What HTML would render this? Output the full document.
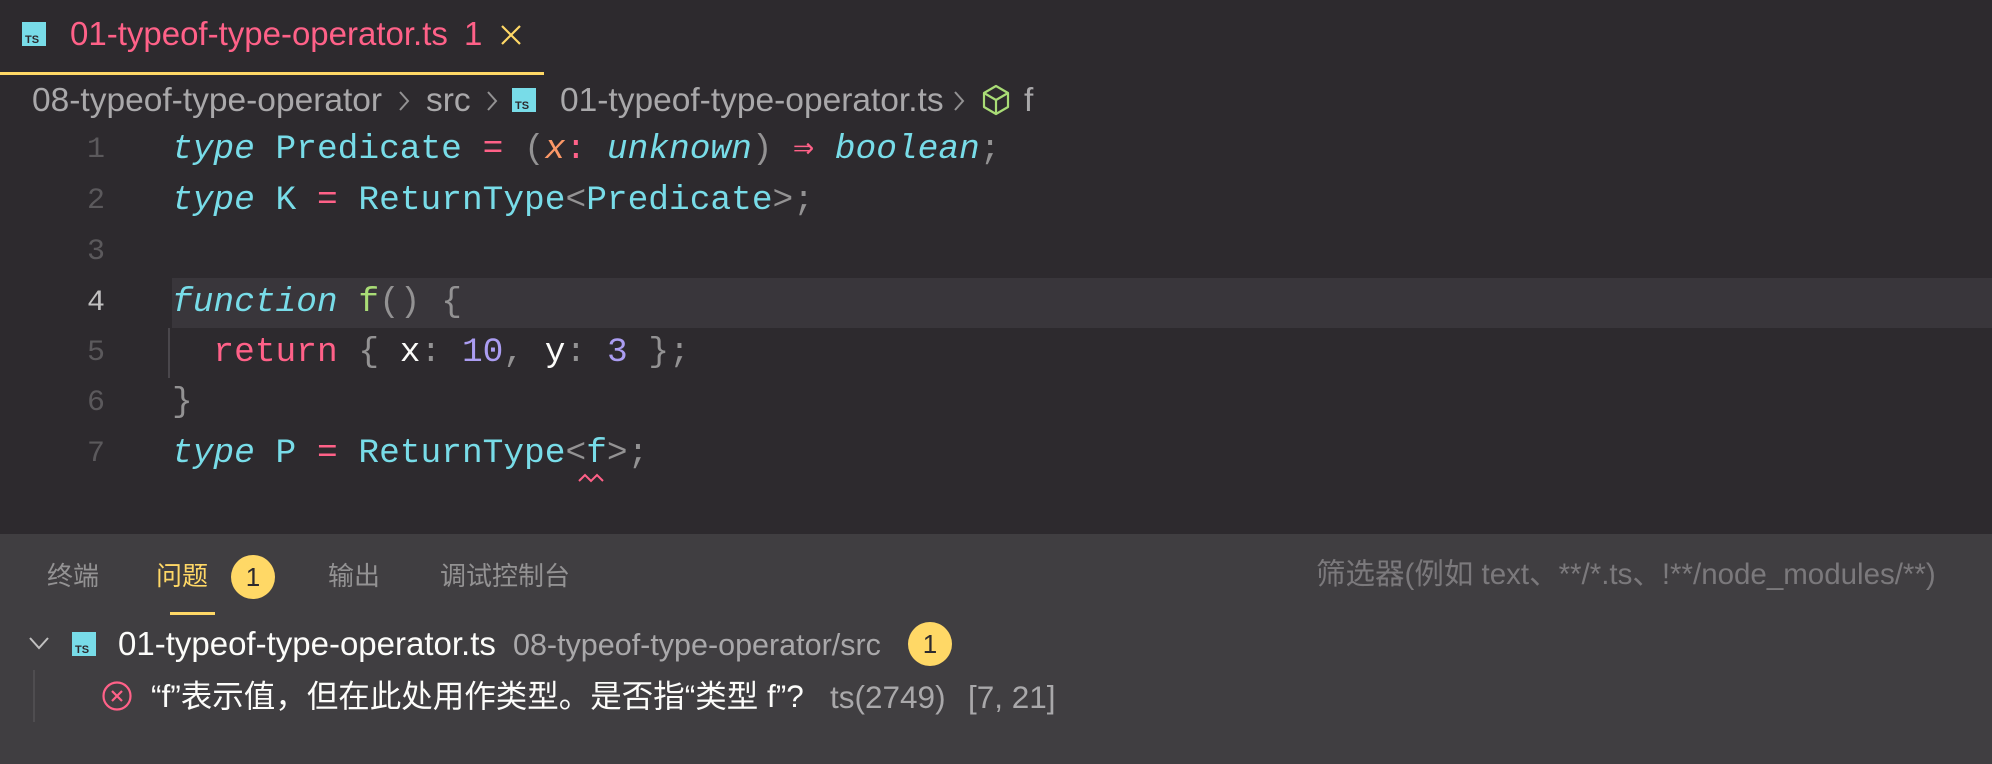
<!DOCTYPE html>
<html><head><meta charset="utf-8"><style>
*{margin:0;padding:0;box-sizing:border-box}
body{width:1992px;height:764px;background:#2d2a2e;position:relative;overflow:hidden;font-family:"Liberation Sans","Noto Sans CJK SC",sans-serif}
.a{position:absolute;white-space:pre}
.ui{font-size:33px;line-height:40px}
.code{font-family:"Liberation Mono",monospace;font-size:34.5px;line-height:50px;color:#fcfcfa}
.ln{position:absolute;left:60px;width:45px;text-align:right;color:#5b595c;font-family:"Liberation Mono",monospace;font-size:30px;line-height:50px}
.c{color:#78dce8}.i{font-style:italic}.p{color:#ff6188}.o{color:#fc9867}.g{color:#939293}.pu{color:#ab9df2}.gr{color:#a9dc76}
.ts{position:absolute;background:#78dce8;width:24px;height:24px}
.ts:after{content:"TS";position:absolute;left:3px;bottom:0px;font:bold 11px "Liberation Sans",sans-serif;color:#2d2a2e;line-height:12px}
.badge{position:absolute;width:44px;height:44px;border-radius:50%;background:#ffd866;color:#2d2a2e;font-size:26px;line-height:44px;text-align:center}
</style></head><body>
<div class="ts" style="left:22px;top:22px"></div>
<div class="a ui" style="left:70px;top:14px;color:#ff6188">01-typeof-type-operator.ts</div>
<div class="a ui" style="left:464px;top:14px;color:#ff6188">1</div>
<svg class="a" style="left:500px;top:24px" width="22" height="22"><path d="M2 2L20 20M20 2L2 20" stroke="#ffd866" stroke-width="2.2"/></svg>
<div class="a" style="left:0;top:72px;width:544px;height:3px;background:#ffd866"></div>
<div class="a ui" style="left:32px;top:81px;color:#a9a8aa;font-size:33.5px">08-typeof-type-operator</div>
<svg class="a" style="left:398px;top:90px" width="12" height="22"><path d="M2 2L10 11L2 20" stroke="#939293" fill="none" stroke-width="2"/></svg>
<div class="a ui" style="left:426px;top:81px;color:#a9a8aa;font-size:33.5px">src</div>
<svg class="a" style="left:486px;top:90px" width="12" height="22"><path d="M2 2L10 11L2 20" stroke="#939293" fill="none" stroke-width="2"/></svg>
<div class="ts" style="left:512px;top:88px"></div>
<div class="a ui" style="left:560px;top:81px;color:#a9a8aa;font-size:33.5px">01-typeof-type-operator.ts</div>
<svg class="a" style="left:953px;top:90px" width="12" height="22"><path d="M2 2L10 11L2 20" stroke="#939293" fill="none" stroke-width="2"/></svg>
<svg class="a" style="left:982px;top:84px" width="28" height="32"><path d="M14 2L26 9V23L14 30L2 23V9Z M2 9L14 16L26 9 M14 16V30" stroke="#a9dc76" fill="none" stroke-width="2.2" stroke-linejoin="round"/></svg>
<div class="a ui" style="left:1024px;top:81px;color:#a9a8aa;font-size:33.5px">f</div>
<div class="a" style="left:172px;top:278px;width:1820px;height:50px;background:#39363b"></div>
<div class="a" style="left:168px;top:328px;width:2px;height:50px;background:#4a474c"></div>
<div class="ln" style="top:125px">1</div>
<div class="ln" style="top:176px">2</div>
<div class="ln" style="top:227px">3</div>
<div class="ln" style="top:278px;color:#c1c0c0">4</div>
<div class="ln" style="top:328px">5</div>
<div class="ln" style="top:378px">6</div>
<div class="ln" style="top:429px">7</div>
<div class="a code" style="left:172px;top:125px"><span class="c i">type</span> <span class="c">Predicate</span> <span class="p">=</span> <span class="g">(</span><span class="o i">x</span><span class="p">:</span> <span class="c i">unknown</span><span class="g">)</span> <span class="p">⇒</span> <span class="c i">boolean</span><span class="g">;</span></div>
<div class="a code" style="left:172px;top:176px"><span class="c i">type</span> <span class="c">K</span> <span class="p">=</span> <span class="c">ReturnType</span><span class="g">&lt;</span><span class="c">Predicate</span><span class="g">&gt;;</span></div>
<div class="a code" style="left:172px;top:278px"><span class="c i">function</span> <span class="gr">f</span><span class="g">() {</span></div>
<div class="a code" style="left:172px;top:328px">  <span class="p">return</span> <span class="g">{</span> x<span class="g">:</span> <span class="pu">10</span><span class="g">,</span> y<span class="g">:</span> <span class="pu">3</span> <span class="g">};</span></div>
<div class="a code" style="left:172px;top:378px"><span class="g">}</span></div>
<div class="a code" style="left:172px;top:429px"><span class="c i">type</span> <span class="c">P</span> <span class="p">=</span> <span class="c">ReturnType</span><span class="g">&lt;</span><span class="c">f</span><span class="g">&gt;;</span></div>
<svg class="a" style="left:578px;top:472px" width="26" height="12"><path d="M1 9L7 3L13 9L19 3L25 9" stroke="#ff6188" fill="none" stroke-width="2"/></svg>
<div class="a" style="left:0;top:534px;width:1992px;height:230px;background:#403e41"></div>
<div class="a" style="left:47px;top:558px;font-size:26px;line-height:36px;color:#939293">终端</div>
<div class="a" style="left:156px;top:558px;font-size:26px;line-height:36px;color:#ffd866">问题</div>
<div class="badge" style="left:231px;top:555px">1</div>
<div class="a" style="left:328px;top:558px;font-size:26px;line-height:36px;color:#939293">输出</div>
<div class="a" style="left:440px;top:558px;font-size:26px;line-height:36px;color:#939293">调试控制台</div>
<div class="a" style="left:170px;top:612px;width:45px;height:3px;background:#ffd866"></div>
<div class="a" style="left:1316px;top:557px;font-size:29.5px;line-height:36px;color:#7b797c">筛选器(例如 text、**/*.ts、!**/node_modules/**)</div>
<svg class="a" style="left:28px;top:634px" width="22" height="18"><path d="M2 4L11 14L20 4" stroke="#c1c0c0" fill="none" stroke-width="2"/></svg>
<div class="ts" style="left:72px;top:632px"></div>
<div class="a" style="left:118px;top:625px;font-size:33px;line-height:38px;color:#fcfcfa">01-typeof-type-operator.ts</div>
<div class="a" style="left:513px;top:626px;font-size:30.5px;line-height:38px;color:#a9a8aa">08-typeof-type-operator/src</div>
<div class="badge" style="left:908px;top:622px">1</div>
<div class="a" style="left:33px;top:670px;width:2px;height:52px;background:#4f4d50"></div>
<svg class="a" style="left:101px;top:680px" width="32" height="32"><circle cx="16" cy="16" r="13.5" stroke="#ff6188" fill="none" stroke-width="2.2"/><path d="M11 11L21 21M21 11L11 21" stroke="#ff6188" stroke-width="2.2"/></svg>
<div class="a" style="left:151px;top:677px;font-size:31.5px;line-height:38px;color:#fcfcfa">“f”表示值，但在此处用作类型。是否指“类型 f”?</div>
<div class="a" style="left:830px;top:678px;font-size:31.5px;line-height:38px;color:#a9a8aa">ts(2749)</div>
<div class="a" style="left:968px;top:678px;font-size:31.5px;line-height:38px;color:#a9a8aa">[7, 21]</div>
</body></html>
